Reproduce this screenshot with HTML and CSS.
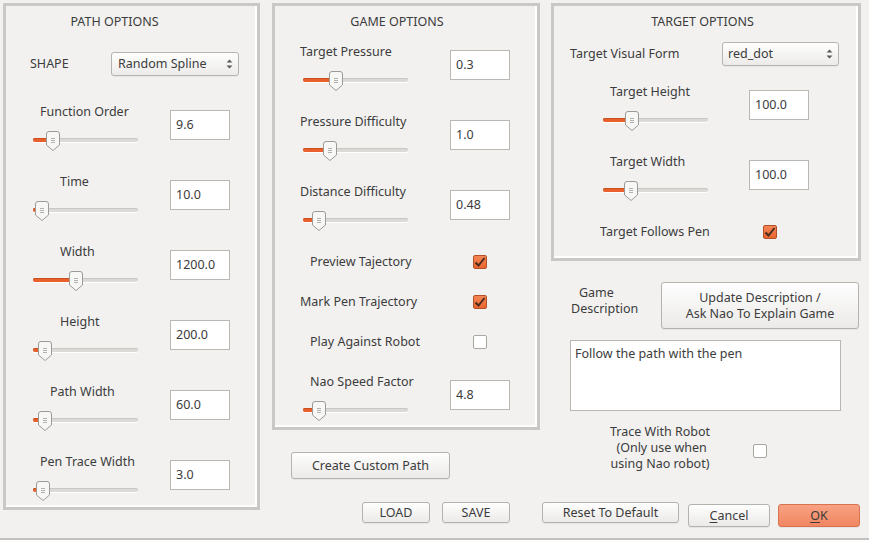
FILE: index.html
```html
<!DOCTYPE html>
<html>
<head>
<meta charset="utf-8">
<title>Game Settings</title>
<link rel="stylesheet" href="styles.css">
</head>
<body>
<div class="window">
  <section class="frame path">
    <div class="title t-path">PATH OPTIONS</div>
    <div class="shape-row">
      <span class="shape-label">SHAPE</span>
      <div class="combo combo-shape"><span>Random Spline</span><svg class="arrows" width="7" height="12" viewBox="0 0 7 12"><path d="M0.5 4.5L3.5 1.5L6.5 4.5Z M0.5 7.5L3.5 10.5L6.5 7.5Z" fill="#5a5a5a"/></svg></div>
    </div>
    <div class="rows">
      <div class="srow">
        <div class="scol"><div class="slabel i34">Function Order</div>
          <div class="slider" style="--p:20px"><div class="fill"></div><svg class="knob" width="14" height="20" viewBox="0 0 14 20"><path d="M3 0.5h8a2.5 2.5 0 0 1 2.5 2.5v11l-6.5 5.5l-6.5-5.5v-11a2.5 2.5 0 0 1 2.5-2.5z" fill="#f7f7f6" stroke="#9d9b98"/><path d="M5 7.5h4M5 9.5h4M5 11.5h4" stroke="#b3b1ae"/></svg></div></div>
        <div class="field">9.6</div>
      </div>
      <div class="srow">
        <div class="scol"><div class="slabel i54">Time</div>
          <div class="slider" style="--p:9px"><div class="fill"></div><svg class="knob" width="14" height="20" viewBox="0 0 14 20"><path d="M3 0.5h8a2.5 2.5 0 0 1 2.5 2.5v11l-6.5 5.5l-6.5-5.5v-11a2.5 2.5 0 0 1 2.5-2.5z" fill="#f7f7f6" stroke="#9d9b98"/><path d="M5 7.5h4M5 9.5h4M5 11.5h4" stroke="#b3b1ae"/></svg></div></div>
        <div class="field">10.0</div>
      </div>
      <div class="srow">
        <div class="scol"><div class="slabel i54">Width</div>
          <div class="slider" style="--p:43px"><div class="fill"></div><svg class="knob" width="14" height="20" viewBox="0 0 14 20"><path d="M3 0.5h8a2.5 2.5 0 0 1 2.5 2.5v11l-6.5 5.5l-6.5-5.5v-11a2.5 2.5 0 0 1 2.5-2.5z" fill="#f7f7f6" stroke="#9d9b98"/><path d="M5 7.5h4M5 9.5h4M5 11.5h4" stroke="#b3b1ae"/></svg></div></div>
        <div class="field">1200.0</div>
      </div>
      <div class="srow">
        <div class="scol"><div class="slabel i54">Height</div>
          <div class="slider" style="--p:12px"><div class="fill"></div><svg class="knob" width="14" height="20" viewBox="0 0 14 20"><path d="M3 0.5h8a2.5 2.5 0 0 1 2.5 2.5v11l-6.5 5.5l-6.5-5.5v-11a2.5 2.5 0 0 1 2.5-2.5z" fill="#f7f7f6" stroke="#9d9b98"/><path d="M5 7.5h4M5 9.5h4M5 11.5h4" stroke="#b3b1ae"/></svg></div></div>
        <div class="field">200.0</div>
      </div>
      <div class="srow">
        <div class="scol"><div class="slabel i44">Path Width</div>
          <div class="slider" style="--p:12px"><div class="fill"></div><svg class="knob" width="14" height="20" viewBox="0 0 14 20"><path d="M3 0.5h8a2.5 2.5 0 0 1 2.5 2.5v11l-6.5 5.5l-6.5-5.5v-11a2.5 2.5 0 0 1 2.5-2.5z" fill="#f7f7f6" stroke="#9d9b98"/><path d="M5 7.5h4M5 9.5h4M5 11.5h4" stroke="#b3b1ae"/></svg></div></div>
        <div class="field">60.0</div>
      </div>
      <div class="srow">
        <div class="scol"><div class="slabel i34">Pen Trace Width</div>
          <div class="slider" style="--p:10px"><div class="fill"></div><svg class="knob" width="14" height="20" viewBox="0 0 14 20"><path d="M3 0.5h8a2.5 2.5 0 0 1 2.5 2.5v11l-6.5 5.5l-6.5-5.5v-11a2.5 2.5 0 0 1 2.5-2.5z" fill="#f7f7f6" stroke="#9d9b98"/><path d="M5 7.5h4M5 9.5h4M5 11.5h4" stroke="#b3b1ae"/></svg></div></div>
        <div class="field">3.0</div>
      </div>
    </div>
  </section>

  <div class="right">
    <div class="top">
      <div class="col2">
        <section class="frame game">
          <div class="title t-game">GAME OPTIONS</div>
          <div class="rows">
            <div class="srow">
              <div class="scol"><div class="slabel i25">Target Pressure</div>
                <div class="slider" style="--p:33px"><div class="fill"></div><svg class="knob" width="14" height="20" viewBox="0 0 14 20"><path d="M3 0.5h8a2.5 2.5 0 0 1 2.5 2.5v11l-6.5 5.5l-6.5-5.5v-11a2.5 2.5 0 0 1 2.5-2.5z" fill="#f7f7f6" stroke="#9d9b98"/><path d="M5 7.5h4M5 9.5h4M5 11.5h4" stroke="#b3b1ae"/></svg></div></div>
              <div class="field">0.3</div>
            </div>
            <div class="srow">
              <div class="scol"><div class="slabel i25">Pressure Difficulty</div>
                <div class="slider" style="--p:27px"><div class="fill"></div><svg class="knob" width="14" height="20" viewBox="0 0 14 20"><path d="M3 0.5h8a2.5 2.5 0 0 1 2.5 2.5v11l-6.5 5.5l-6.5-5.5v-11a2.5 2.5 0 0 1 2.5-2.5z" fill="#f7f7f6" stroke="#9d9b98"/><path d="M5 7.5h4M5 9.5h4M5 11.5h4" stroke="#b3b1ae"/></svg></div></div>
              <div class="field">1.0</div>
            </div>
            <div class="srow">
              <div class="scol"><div class="slabel i25">Distance Difficulty</div>
                <div class="slider" style="--p:16px"><div class="fill"></div><svg class="knob" width="14" height="20" viewBox="0 0 14 20"><path d="M3 0.5h8a2.5 2.5 0 0 1 2.5 2.5v11l-6.5 5.5l-6.5-5.5v-11a2.5 2.5 0 0 1 2.5-2.5z" fill="#f7f7f6" stroke="#9d9b98"/><path d="M5 7.5h4M5 9.5h4M5 11.5h4" stroke="#b3b1ae"/></svg></div></div>
              <div class="field">0.48</div>
            </div>
            <div class="crow">
              <span class="clabel i35">Preview Tajectory</span>
              <span class="cb on"><svg width="12" height="11" viewBox="0 0 12 11"><path d="M1.5 5.5L4.5 8.5L10.5 1" fill="none" stroke="#4b2b1c" stroke-width="2"/></svg></span>
            </div>
            <div class="crow">
              <span class="clabel i25">Mark Pen Trajectory</span>
              <span class="cb on"><svg width="12" height="11" viewBox="0 0 12 11"><path d="M1.5 5.5L4.5 8.5L10.5 1" fill="none" stroke="#4b2b1c" stroke-width="2"/></svg></span>
            </div>
            <div class="crow">
              <span class="clabel i35">Play Against Robot</span>
              <span class="cb"></span>
            </div>
            <div class="srow">
              <div class="scol"><div class="slabel i35">Nao Speed Factor</div>
                <div class="slider" style="--p:16px"><div class="fill"></div><svg class="knob" width="14" height="20" viewBox="0 0 14 20"><path d="M3 0.5h8a2.5 2.5 0 0 1 2.5 2.5v11l-6.5 5.5l-6.5-5.5v-11a2.5 2.5 0 0 1 2.5-2.5z" fill="#f7f7f6" stroke="#9d9b98"/><path d="M5 7.5h4M5 9.5h4M5 11.5h4" stroke="#b3b1ae"/></svg></div></div>
              <div class="field">4.8</div>
            </div>
          </div>
        </section>
        <div class="btn btn-custom">Create Custom Path</div>
      </div>

      <div class="col3">
        <section class="frame target">
          <div class="title t-target">TARGET OPTIONS</div>
          <div class="tvf-row">
            <span class="tvf-label">Target Visual Form</span>
            <div class="combo combo-form"><span>red_dot</span><svg class="arrows" width="7" height="12" viewBox="0 0 7 12"><path d="M0.5 4.5L3.5 1.5L6.5 4.5Z M0.5 7.5L3.5 10.5L6.5 7.5Z" fill="#5a5a5a"/></svg></div>
          </div>
          <div class="rows">
            <div class="srow">
              <div class="scol"><div class="slabel i56">Target Height</div>
                <div class="slider" style="--p:29px"><div class="fill"></div><svg class="knob" width="14" height="20" viewBox="0 0 14 20"><path d="M3 0.5h8a2.5 2.5 0 0 1 2.5 2.5v11l-6.5 5.5l-6.5-5.5v-11a2.5 2.5 0 0 1 2.5-2.5z" fill="#f7f7f6" stroke="#9d9b98"/><path d="M5 7.5h4M5 9.5h4M5 11.5h4" stroke="#b3b1ae"/></svg></div></div>
              <div class="field">100.0</div>
            </div>
            <div class="srow">
              <div class="scol"><div class="slabel i56">Target Width</div>
                <div class="slider" style="--p:28px"><div class="fill"></div><svg class="knob" width="14" height="20" viewBox="0 0 14 20"><path d="M3 0.5h8a2.5 2.5 0 0 1 2.5 2.5v11l-6.5 5.5l-6.5-5.5v-11a2.5 2.5 0 0 1 2.5-2.5z" fill="#f7f7f6" stroke="#9d9b98"/><path d="M5 7.5h4M5 9.5h4M5 11.5h4" stroke="#b3b1ae"/></svg></div></div>
              <div class="field">100.0</div>
            </div>
            <div class="crow">
              <span class="clabel i46">Target Follows Pen</span>
              <span class="cb on"><svg width="12" height="11" viewBox="0 0 12 11"><path d="M1.5 5.5L4.5 8.5L10.5 1" fill="none" stroke="#4b2b1c" stroke-width="2"/></svg></span>
            </div>
          </div>
        </section>

        <div class="desc-row">
          <div class="desc-label"><span class="l1">Game</span><br>Description</div>
          <div class="btn btn-update">Update Description /<br>Ask Nao To Explain Game</div>
        </div>
        <div class="notes">Follow the path with the pen</div>
        <div class="trace-row">
          <div class="trace-label">Trace With Robot<br>&nbsp;(Only use when<br>using Nao robot)</div>
          <span class="cb"></span>
        </div>
      </div>
    </div>

    <div class="bottom">
      <div class="btn btn-load">LOAD</div>
      <div class="btn btn-save">SAVE</div>
      <div class="btn btn-reset">Reset To Default</div>
      <div class="btn btn-cancel"><span><u>C</u>ancel</span></div>
      <div class="btn btn-ok"><span><u>O</u>K</span></div>
    </div>
  </div>
</div>
</body>
</html>
```

FILE: styles.css
```css
* { box-sizing: border-box; }

body {
  margin: 0;
  background: #f2f1f0;
  font-family: "Noto Sans", "Open Sans", sans-serif;
  font-size: 12.5px;
  line-height: 16px;
  color: #3c3c3c;
}

.window {
  width: 869px;
  height: 540px;
  display: flex;
  align-items: flex-start;
  padding: 3px 0 0 3px;
  border-bottom: 2px solid #c2c1bf;
  background: #f2f1f0;
  overflow: hidden;
}

.frame {
  border: 3px solid #c9c8c6;
  box-shadow: inset -2px -2px 0 #ffffff;
  flex: none;
}

.path { width: 257px; height: 507px; }
.game { width: 268px; height: 427px; }
.target { width: 310px; height: 258px; }

.title {
  width: 200px;
  text-align: center;
  margin-top: 8px;
  line-height: 16px;
}
.t-path { margin-left: 8.5px; }
.t-game { margin-left: 22px; }
.t-target { margin-left: 48.5px; }

/* combo boxes */
.combo {
  display: flex;
  align-items: center;
  justify-content: space-between;
  height: 24px;
  padding: 0 5px 0 6px;
  border: 1px solid #b7b4af;
  border-radius: 3px;
  background: linear-gradient(#fefefe, #ecebe9);
  box-shadow: 0 1px 0 rgba(0,0,0,0.04);
}
.combo-shape { width: 128px; }
.combo-form { width: 117px; padding-left: 5px; }
.arrows { flex: none; }

.shape-row {
  display: flex;
  align-items: center;
  height: 24px;
  margin-top: 22px;
}
.shape-label { width: 105px; padding-left: 24px; }

.tvf-row {
  display: flex;
  align-items: center;
  height: 24px;
  margin-top: 12px;
}
.tvf-label { width: 168px; padding-left: 16px; }

/* rows */
.rows { display: flex; flex-direction: column; }
.path .rows { margin-top: 28px; gap: 20px; }
.game .rows { margin-top: 14px; }
.target .rows { margin-top: 18px; }

.srow { display: flex; height: 50px; flex: none; }
.game .srow, .target .srow { margin-bottom: 20px; }
.game .crow { margin-bottom: 24px; }
.game .rows > :last-child, .target .rows > :last-child { margin-bottom: 0; }

.path .scol { width: 164px; }
.game .scol { width: 175px; }
.target .scol { width: 195px; }

.slabel { line-height: 16px; white-space: nowrap; }
.i25 { padding-left: 25px; }
.i34 { padding-left: 34px; }
.i35 { padding-left: 35px; }
.i44 { padding-left: 44px; }
.i46 { padding-left: 46px; }
.i54 { padding-left: 54px; }
.i56 { padding-left: 56px; }

.field {
  width: 60px;
  height: 30px;
  margin-top: 6px;
  padding: 0 5px;
  border: 1px solid #bab7b2;
  background: #ffffff;
  line-height: 28px;
  flex: none;
}

/* sliders */
.slider {
  position: relative;
  width: 105px;
  height: 20px;
  margin-top: 10px;
}
.path .slider { margin-left: 27px; }
.game .slider { margin-left: 28px; }
.target .slider { margin-left: 49px; }

.slider::before {
  content: "";
  position: absolute;
  left: 0;
  right: 0;
  top: 8px;
  height: 4px;
  border-radius: 2px;
  background: #dcdad7;
  box-shadow: inset 0 1px 0 #c9c7c4, 0 1px 0 #ffffff;
}
.fill {
  position: absolute;
  left: 0;
  top: 8px;
  height: 4px;
  width: var(--p);
  border-radius: 2px;
  background: #e9602d;
  box-shadow: inset 0 1px 0 #c9501f;
}
.knob {
  position: absolute;
  top: 1px;
  left: calc(var(--p) - 7px);
}

/* checkboxes */
.crow {
  display: flex;
  align-items: center;
  height: 16px;
  flex: none;
}
.game .clabel { width: 198px; }
.target .clabel { width: 209px; }

.cb {
  width: 14px;
  height: 14px;
  flex: none;
  display: flex;
  align-items: center;
  justify-content: center;
  border: 1px solid #a9a6a1;
  border-radius: 2px;
  background: #ffffff;
}
.cb.on {
  background: linear-gradient(#f58555, #e8662f);
  border-color: #b24f25;
}

/* buttons */
.btn {
  display: flex;
  align-items: center;
  justify-content: center;
  text-align: center;
  border: 1px solid #b5b2ad;
  border-radius: 3px;
  background: linear-gradient(#fefefe, #ebeae8);
  box-shadow: 0 1px 0 rgba(0,0,0,0.05);
  flex: none;
}

.right {
  margin-left: 12px;
  display: flex;
  flex-direction: column;
}
.top { display: flex; align-items: flex-start; }
.col2 { width: 268px; flex: none; }
.col3 { width: 310px; margin-left: 11px; flex: none; }

.btn-custom { width: 159px; height: 27px; margin: 22px 0 0 19px; }

.desc-row { display: flex; margin-top: 21px; }
.desc-label {
  width: 110px;
  padding-left: 20px;
  margin-top: 3px;
  line-height: 16px;
}
.l1 { padding-left: 8px; }
.btn-update { width: 198px; height: 47px; line-height: 16px; }

.notes {
  width: 271px;
  height: 71px;
  margin: 11px 0 0 19px;
  padding: 5px 4px;
  border: 1px solid #bab7b2;
  background: #ffffff;
  line-height: 16px;
}

.trace-row { display: flex; align-items: flex-start; margin-top: 13px; }
.trace-label {
  width: 122px;
  margin-left: 48px;
  text-align: center;
  line-height: 16px;
}
.trace-row .cb { margin-left: 32px; margin-top: 20px; }

.bottom {
  display: flex;
  align-items: flex-start;
  margin-top: 23px;
}
.btn-load { width: 68px; height: 21px; margin-left: 90px; }
.btn-save { width: 68px; height: 21px; margin-left: 12px; }
.btn-reset { width: 137px; height: 21px; margin-left: 32px; }
.btn-cancel { width: 82px; height: 23px; margin-left: 9px; margin-top: 2px; }
.btn-ok {
  width: 82px;
  height: 23px;
  margin-left: 8px;
  margin-top: 2px;
  border-color: #d8724f;
  background: linear-gradient(#f8a283, #f08660);
}
u { text-underline-offset: 2px; }
```
